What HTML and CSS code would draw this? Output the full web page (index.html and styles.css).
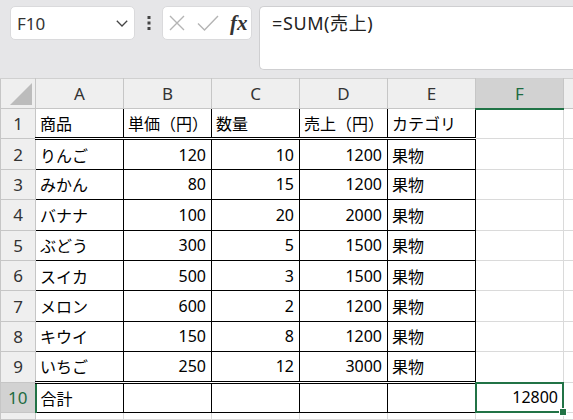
FILE: index.html
```html
<!DOCTYPE html>
<html lang="ja">
<head>
<meta charset="utf-8">
<link rel="stylesheet" href="styles.css">
</head>
<body>
<div class="topbar">
  <div class="namebox">
    <span class="nb-text">F10</span>
    <svg class="chev" width="12" height="7" viewBox="0 0 12 7"><path d="M0.8 0.8 L6 6 L11.2 0.8" fill="none" stroke="#444" stroke-width="1.3"/></svg>
  </div>
  <div class="dots">
    <svg width="4" height="14" viewBox="0 0 4 14"><rect x="0.5" y="0" width="3" height="3" fill="#444"/><rect x="0.5" y="5.5" width="3" height="3" fill="#444"/><rect x="0.5" y="11" width="3" height="3" fill="#444"/></svg>
  </div>
  <div class="fxbox">
    <svg class="ic-x" width="16" height="16" viewBox="0 0 16 16"><path d="M1 1 L15 15 M15 1 L1 15" stroke="#b4b4b4" stroke-width="1.4" fill="none"/></svg>
    <svg class="ic-ok" width="22" height="16" viewBox="0 0 22 16"><path d="M1 8.5 L7.5 15 L21 1" stroke="#b4b4b4" stroke-width="1.4" fill="none"/></svg>
    <span class="fx">fx</span>
  </div>
  <div class="formula">=SUM(売上)</div>
</div>
<table class="sheet">
  <colgroup>
    <col class="c-rh"><col class="c-col"><col class="c-col"><col class="c-col"><col class="c-col"><col class="c-col"><col class="c-col"><col class="c-last">
  </colgroup>
  <tr class="hdr">
    <th class="corner"><div class="corner-in"><svg width="22" height="22" viewBox="0 0 22 22"><path d="M22 0 L22 22 L0 22 Z" fill="#bcbcbc"/></svg></div></th>
    <th>A</th><th>B</th><th>C</th><th>D</th><th>E</th><th class="sel-col">F</th><th></th>
  </tr>
  <tr class="r dbl">
    <th>1</th><td class="d">商品</td><td class="d">単価（円）</td><td class="d">数量</td><td class="d">売上（円）</td><td class="d">カテゴリ</td><td></td><td></td>
  </tr>
  <tr class="r">
    <th>2</th><td class="d">りんご</td><td class="d n">120</td><td class="d n">10</td><td class="d n">1200</td><td class="d">果物</td><td></td><td></td>
  </tr>
  <tr class="r">
    <th>3</th><td class="d">みかん</td><td class="d n">80</td><td class="d n">15</td><td class="d n">1200</td><td class="d">果物</td><td></td><td></td>
  </tr>
  <tr class="r">
    <th>4</th><td class="d">バナナ</td><td class="d n">100</td><td class="d n">20</td><td class="d n">2000</td><td class="d">果物</td><td></td><td></td>
  </tr>
  <tr class="r">
    <th>5</th><td class="d">ぶどう</td><td class="d n">300</td><td class="d n">5</td><td class="d n">1500</td><td class="d">果物</td><td></td><td></td>
  </tr>
  <tr class="r">
    <th>6</th><td class="d">スイカ</td><td class="d n">500</td><td class="d n">3</td><td class="d n">1500</td><td class="d">果物</td><td></td><td></td>
  </tr>
  <tr class="r">
    <th>7</th><td class="d">メロン</td><td class="d n">600</td><td class="d n">2</td><td class="d n">1200</td><td class="d">果物</td><td></td><td></td>
  </tr>
  <tr class="r">
    <th>8</th><td class="d">キウイ</td><td class="d n">150</td><td class="d n">8</td><td class="d n">1200</td><td class="d">果物</td><td></td><td></td>
  </tr>
  <tr class="r dbl">
    <th>9</th><td class="d">いちご</td><td class="d n">250</td><td class="d n">12</td><td class="d n">3000</td><td class="d">果物</td><td></td><td></td>
  </tr>
  <tr class="r">
    <th class="sel-row">10</th><td class="d">合計</td><td class="d"></td><td class="d"></td><td class="d"></td><td class="d"></td><td class="n active"><div class="selbox"><span class="handle"></span></div>12800</td><td></td>
  </tr>
  <tr class="stub">
    <th></th><td></td><td></td><td></td><td></td><td></td><td></td><td></td>
  </tr>
</table>
</body>
</html>
```
FILE: styles.css
```css
html, body {
  margin: 0;
  padding: 0;
  overflow: hidden;
  background: #ffffff;
  font-family: "Noto Sans CJK JP", "Noto Sans", sans-serif;
  color: #000;
}

.topbar {
  height: 78px;
  box-sizing: border-box;
  background: #e6e6e8;
  display: flex;
  align-items: flex-start;
  padding: 6px 0 0 10px;
}

.namebox {
  width: 125px;
  height: 34px;
  box-sizing: border-box;
  background: #fff;
  border: 1px solid #dadadc;
  border-radius: 5px;
  display: flex;
  align-items: center;
  justify-content: space-between;
  padding: 0 6px 0 6px;
}

.nb-text {
  font-family: "Noto Sans", sans-serif;
  font-size: 17px;
  color: #333;
}

.chev {
  margin-top: 1px;
}

.dots {
  width: 27px;
  height: 34px;
  display: flex;
  align-items: center;
  justify-content: center;
}

.fxbox {
  width: 90px;
  height: 34px;
  box-sizing: border-box;
  background: #fff;
  border: 1px solid #dadadc;
  border-radius: 5px;
  display: flex;
  align-items: center;
  padding-left: 6px;
}

.ic-ok {
  margin-left: 12px;
}

.fx {
  margin-left: 11px;
  font-family: "Liberation Serif", serif;
  font-style: italic;
  font-weight: bold;
  font-size: 21px;
  color: #333;
  line-height: 1;
}

.formula {
  margin-left: 7px;
  flex: 1;
  height: 64px;
  box-sizing: border-box;
  background: #fff;
  border: 1px solid #cfcfd1;
  border-right: none;
  border-radius: 5px 0 0 5px;
  padding: 2px 0 0 12px;
  font-size: 18px;
  letter-spacing: 0.6px;
  color: #222;
  font-family: "Noto Sans", "Noto Sans CJK JP", sans-serif;
}

.sheet {
  border-collapse: collapse;
  table-layout: fixed;
  width: 573px;
}

.c-rh { width: 35px; }
.c-col { width: 88px; }
.c-last { width: 10px; }

.sheet th {
  background: #efefef;
  border: 1px solid #c6c6c6;
  font-weight: normal;
  font-family: "Noto Sans", sans-serif;
  font-size: 17px;
  color: #333;
  padding: 0;
  text-align: center;
  vertical-align: middle;
}

.hdr {
  height: 30px;
}

.hdr th {
  border-top: 1px solid #d0d0d0;
}

.corner {
  padding: 0;
}

.corner-in {
  height: 29px;
  display: flex;
  justify-content: flex-end;
  align-items: flex-end;
  padding: 0 3px 3px 0;
  box-sizing: border-box;
}

.sel-col {
  background: #d2d2d2 !important;
  color: #1e6b41 !important;
  border-bottom: 2px solid #217346 !important;
}

.sel-row {
  background: #d2d2d2 !important;
  color: #1e6b41 !important;
  border-right: 2px solid #217346 !important;
}

.r {
  height: 30.4px;
}

.stub {
  height: 7px;
}

.sheet td {
  border: 1px solid #dadada;
  padding: 0 5px 0 4px;
  font-size: 16px;
  white-space: nowrap;
  overflow: visible;
  vertical-align: middle;
  line-height: 1;
}

.sheet td.d {
  border: 1px solid #000;
}

.dbl td.d {
  border-bottom: 3px double #000;
}

.n {
  text-align: right;
  font-family: "Noto Sans", "Noto Sans CJK JP", sans-serif;
  font-size: 17px;
}

.active {
  position: relative;
}

.selbox {
  position: absolute;
  left: -1px;
  top: -1px;
  right: -1px;
  bottom: -1px;
  border: 2px solid #217346;
}

.handle {
  position: absolute;
  right: -5px;
  bottom: -5px;
  width: 6px;
  height: 6px;
  background: #217346;
  border: 1px solid #fff;
}
```
